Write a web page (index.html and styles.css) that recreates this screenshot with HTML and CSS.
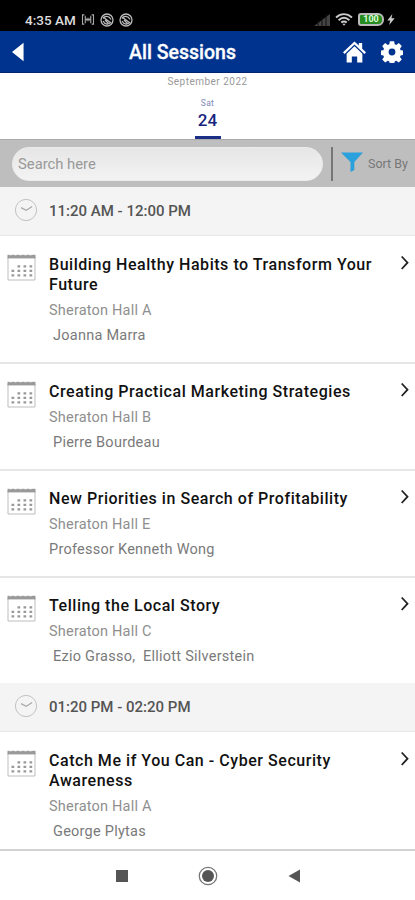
FILE: index.html
```html
<!DOCTYPE html>
<html lang="en">
<head>
<meta charset="utf-8">
<title>All Sessions</title>
<link rel="stylesheet" href="styles.css">
</head>
<body>
<svg class="defs" aria-hidden="true">
  <symbol id="calendar" viewBox="0 0 28 28">
    <path d="M.5 4V27H27.5V4" fill="none" stroke="#bdbdbd"/>
    <path d="M0 1.8H28V5.400H0z" fill="#999"/>
    <path d="M2 1.800h2M7 1.800h2M12 1.800h2M17 1.800h2M22 1.800h2" stroke="#fff" stroke-width="1"/>
    <path d="M10 13.300h15M4 17.800h21M4 22.300h21" fill="none" stroke="#999" stroke-width="2.3" stroke-dasharray="2.700 3.300"/>
  </symbol>
  <symbol id="clock" viewBox="0 0 24 24">
    <circle cx="12" cy="12" r="10.6" fill="none" stroke="#c2c2c2"/>
    <path d="M7 9.6l5.2 2.6 6-3.8" fill="none" stroke="#aaa" stroke-width="1.2"/>
  </symbol>
  <symbol id="chevron" viewBox="0 0 10 16">
    <path d="M1.7 1.5L7.5 7.7 1.7 14" fill="none" stroke="#222" stroke-width="1.8"/>
  </symbol>
  <symbol id="ring" viewBox="0 0 14 14">
    <circle cx="7" cy="7" r="6" fill="none" stroke="#bbb" stroke-width="1.3"/>
    <path d="M3 5.5c2-3 6-3 8 1M3 8c2 4 6 4 8 1M3 4l8 6M5 7l4 4" fill="none" stroke="#bbb" stroke-width="1.3"/>
  </symbol>
</svg>
<div class="status">
  <span class="status-time">4:35 AM</span>
  <svg class="cast" viewBox="0 0 14 12"><path d="M3 1H1v10h2M11 1h2v10h-2M4 2v8M10 2v8M4 6h6M6 4v4M8 4v4" fill="none" stroke="#aaa" stroke-width="1.2"/></svg>
  <svg class="ring"><use href="#ring"/></svg>
  <svg class="ring"><use href="#ring"/></svg>
  <svg class="signal" viewBox="0 0 16 12"><path d="M0 12L16 0V12z" fill="#444"/><path d="M4 6v6M8 3v9M12 0v12" stroke="#111"/></svg>
  <svg class="wifi" viewBox="0 0 18 13"><path d="M1 4.5c5-4.3 11-4.3 16 0M3.6 7.2c3.4-3 7.4-3 10.8 0M6.2 9.6c1.8-1.5 3.8-1.5 5.6 0" fill="none" stroke="#ccc" stroke-width="1.9"/><path d="M7.3 10.7h3.4L9 12.8z" fill="#ccc"/></svg>
  <span class="battery">100</span>
  <svg class="bolt" viewBox="0 0 8 12"><path d="M5.5 0L0 7h3.2L2 12l6-7.4H4.5z" fill="#ccc"/></svg>
</div>
<header class="header">
  <svg class="back" viewBox="0 0 13 20"><path d="M12.5 0V20L0 10z" fill="#fff"/></svg>
  <h1 class="title">All Sessions</h1>
  <svg class="home" viewBox="0 0 24 22"><path d="M12 0l4.5 4.2V1.5H20v6l4 3.8-1.6 1.7L12 3.3 1.6 13 0 11.3z" fill="#fff"/><path d="M12 5l8.2 7.7V22h-5.4v-6.4H9.2V22H3.8v-9.3z" fill="#fff"/></svg>
  <svg class="gear" viewBox="-11 -11 22 22"><path d="M-2.1-10.8h4.2l.6 3.1 1.5.6 2.6-1.8 3 3-1.8 2.6.6 1.5 3.1.5v4.2l-3.1.6-.6 1.5 1.8 2.6-3 3-2.6-1.8-1.5.6-.6 3h-4.2l-.6-3-1.5-.6-2.6 1.8-3-3 1.8-2.6-.6-1.5-3.1-.6v-4.2l3.1-.5.6-1.5-1.8-2.6 3-3 2.6 1.8 1.5-.6zM0-3.4a3.4 3.4 0 1 0 0 6.8 3.4 3.4 0 0 0 0-6.8z" fill="#fff" fill-rule="evenodd"/></svg>
</header>
<div class="dates">
  <div class="month">September 2022</div>
  <div class="weekday">Sat</div>
  <div class="day">24</div>
</div>
<div class="search">
  <div class="field">Search here</div>
  <div class="rule"></div>
  <svg class="filter" viewBox="0 0 22 20"><path d="M0 .5H22L13.3 10v8l-3.8 2V10z" fill="#2aa0dc"/></svg>
  <span class="sort">Sort By</span>
</div>
<main class="list">
  <div class="slot"><svg class="clock"><use href="#clock"/></svg>11:20 AM - 12:00 PM</div>
  <article class="session">
    <svg class="calendar"><use href="#calendar"/></svg>
    <div class="info">
      <h2 class="name">Building Healthy Habits to Transform Your<br>Future</h2>
      <p class="place">Sheraton Hall A</p>
      <p class="speaker indent">Joanna Marra</p>
    </div>
    <svg class="chevron"><use href="#chevron"/></svg>
  </article>
  <article class="session">
    <svg class="calendar"><use href="#calendar"/></svg>
    <div class="info">
      <h2 class="name">Creating Practical Marketing Strategies</h2>
      <p class="place">Sheraton Hall B</p>
      <p class="speaker indent">Pierre Bourdeau</p>
    </div>
    <svg class="chevron"><use href="#chevron"/></svg>
  </article>
  <article class="session">
    <svg class="calendar"><use href="#calendar"/></svg>
    <div class="info">
      <h2 class="name">New Priorities in Search of Profitability</h2>
      <p class="place">Sheraton Hall E</p>
      <p class="speaker">Professor Kenneth Wong</p>
    </div>
    <svg class="chevron"><use href="#chevron"/></svg>
  </article>
  <article class="session">
    <svg class="calendar"><use href="#calendar"/></svg>
    <div class="info">
      <h2 class="name">Telling the Local Story</h2>
      <p class="place">Sheraton Hall C</p>
      <p class="speaker indent">Ezio Grasso,&nbsp; Elliott Silverstein</p>
    </div>
    <svg class="chevron"><use href="#chevron"/></svg>
  </article>
  <div class="slot"><svg class="clock"><use href="#clock"/></svg>01:20 PM - 02:20 PM</div>
  <article class="session">
    <svg class="calendar"><use href="#calendar"/></svg>
    <div class="info">
      <h2 class="name">Catch Me if You Can - Cyber Security<br>Awareness</h2>
      <p class="place">Sheraton Hall A</p>
      <p class="speaker indent">George Plytas</p>
    </div>
    <svg class="chevron"><use href="#chevron"/></svg>
  </article>
</main>
<nav class="nav">
  <svg viewBox="0 0 20 20"><path d="M4 4h12v12H4z" fill="#555"/></svg>
  <svg viewBox="0 0 20 20"><circle cx="10" cy="10" r="8.7" fill="none" stroke="#777" stroke-width="1.3"/><circle cx="10" cy="10" r="6" fill="#555"/></svg>
  <svg viewBox="0 0 20 20"><path d="M16 3.5v13L4.500 10z" fill="#555"/></svg>
</nav>
</body>
</html>
```
FILE: styles.css
```css
* { box-sizing: border-box; }
body { margin: 0; width: 415px; height: 900px; overflow: hidden; display: flex; flex-direction: column; background: #fff; font-family: Roboto, "Liberation Sans", sans-serif; }
h1, h2, p { margin: 0; }
svg { display: block; flex: none; }
.defs { display: none; }

.status { height: 31px; flex: none; display: flex; align-items: center; padding: 8px 20px 0 25px; background: #000; color: #ddd; }
.status-time { width: 51px; font-size: 13.500px; font-weight: 500; white-space: nowrap; }
.cast { width: 14px; height: 11px; margin: 0 5px; }
.ring { width: 14px; height: 14px; margin-right: 5px; }
.signal { width: 16px; height: 12px; margin-left: auto; }
.wifi { width: 18px; height: 13px; margin: 0 5px 0 5px; }
.battery { width: 26px; height: 13px; margin-right: -1px; border: 2px solid #bbb; border-radius: 3px 6px 6px 3px; background: #278c20; color: #dfd; font-size: 9px; font-weight: 700; line-height: 9px; text-align: center; }
.bolt { width: 8px; height: 11px; margin-left: 4px; }

.header { height: 42px; flex: none; display: flex; align-items: center; padding: 0 12px; background: #00338d; border-bottom: 1px solid #002070; }
.back { width: 12px; height: 20px; }
.title { width: 120px; margin-left: 105px; color: #fff; font-size: 19.500px; font-weight: 500; white-space: nowrap; padding-top: 2px; -webkit-text-stroke: .3px #fff; }
.home { width: 23px; height: 22px; margin-left: auto; }
.gear { width: 22px; height: 22px; margin-left: 15px; }

.dates { height: 66px; flex: none; display: flex; flex-direction: column; align-items: center; padding-top: 3px; }
.month { color: #999; font-size: 10px; line-height: 12px; letter-spacing: .48px; }
.weekday { margin-top: 10px; color: #8088b8; font-size: 8.500px; line-height: 10px; letter-spacing: .3px; }
.day { width: 26px; height: 31px; color: #14237f; border-bottom: 3px solid #1c2f86; font-size: 17px; font-weight: 500; line-height: 25px; text-align: center; }

.search { height: 48px; flex: none; display: flex; align-items: center; padding: 0 6px 0 12px; background: #bebebe; border-top: 1px solid #aaa; }
.field { width: 311px; height: 34px; padding-left: 5px; border-radius: 17px; background: linear-gradient(#e6e6e6, #f3f3f3); border: 1px solid #ececec; color: #999; font-size: 14.800px; line-height: 32px; }
.rule { width: 2px; height: 34px; margin-left: 8px; background: #777; }
.filter { width: 22px; height: 20px; margin: -3px 0 0 8px; }
.sort { margin-left: 5px; color: #777; font-size: 12.500px; white-space: nowrap; }

.list { height: 664px; flex: none; overflow: hidden; border-bottom: 2px solid #d2d2d2; }
.slot { height: 48px; display: flex; align-items: center; padding-left: 14px; background: #f4f4f4; color: #555; font-size: 15px; font-weight: 500; }
.clock { width: 24px; height: 24px; margin: -2px 11px 0 0; }
.session { display: flex; align-items: flex-start; padding: 18px 5px 14px 7px; border-top: 2px solid #e6e6e6; }
.slot + .session { padding-top: 19px; border-top-width: 1px; }
.calendar { width: 29px; height: 28px; margin-top: -2px; }
.info { flex: 1; margin-left: 13px; white-space: nowrap; }
.name { color: #111; font-size: 16px; font-weight: 500; line-height: 20px; letter-spacing: .54px; }
.place { margin-top: 5px; color: #8f8f8f; font-size: 14.500px; line-height: 22px; letter-spacing: .2px; }
.speaker { color: #7a7a7a; font-size: 14.500px; line-height: 25px; margin-top: 1px; letter-spacing: .25px; }
.indent { padding-left: 4px; }
.chevron { width: 10px; height: 16px; }

.nav { flex: 1; display: flex; justify-content: center; align-items: center; gap: 66px; }
.nav svg { width: 20px; height: 20px; }
```
